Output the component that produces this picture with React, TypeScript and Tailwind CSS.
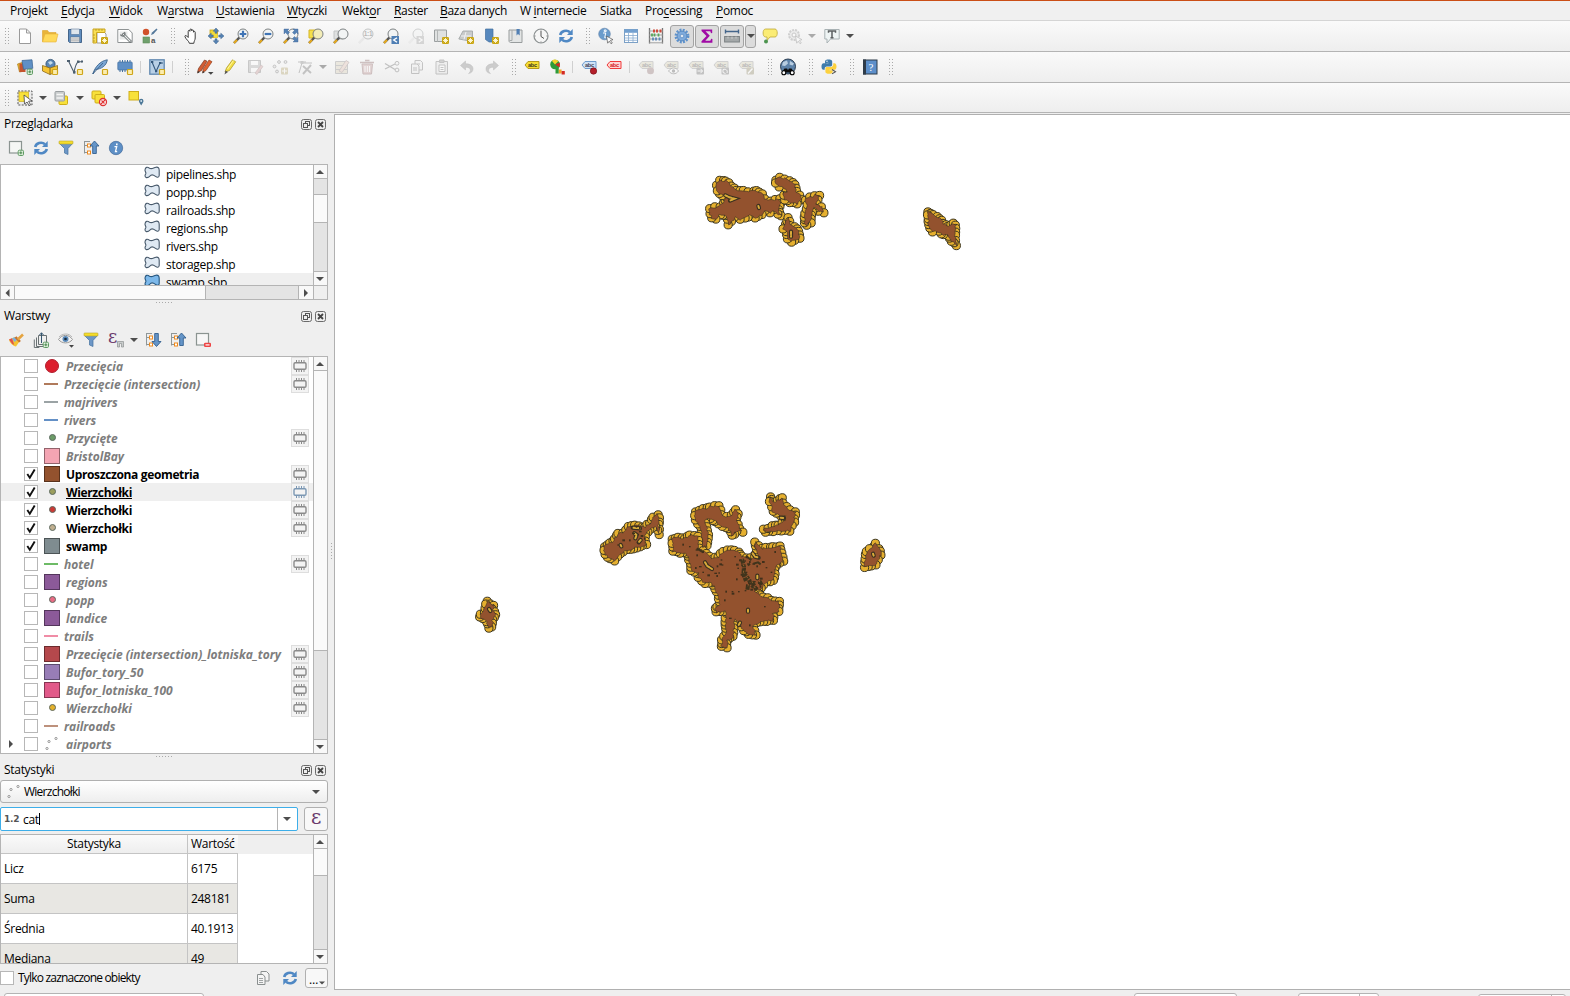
import React from "react";

/* ---------- icon drawings, all on a 16x16 grid ---------- */
const Gold = () => (
  <g>
    <rect x="9" y="9" width="7" height="7" rx="1.3" fill="#c9a512" />
    <path d="M12.5 10v5M10 12.5h5M10.8 10.8l3.4 3.4M14.2 10.8l-3.4 3.4" stroke="#fffbe0" strokeWidth="0.9" />
  </g>
);
const GoldBox = () => <rect x="10.5" y="10.5" width="5" height="5" rx="0.8" fill="#fbedb0" stroke="#cfa61a" strokeWidth="1.2" />;
const GreenPlus = () => (
  <g>
    <rect x="10.2" y="10.2" width="5.3" height="5.3" rx="1.2" fill="#dff0dc" stroke="#5f9b64" />
    <path d="M12.85 11.3v3M11.3 12.85h3" stroke="#4b8a50" />
  </g>
);
const Lens = ({ handle = "#e8ab1e", fill = "#f2f4f4", edge = "#7d8283" }: { handle?: string; fill?: string; edge?: string }) => (
  <g>
    <path d="M1 15L6.3 9.7" stroke="#555" strokeWidth="2.4" opacity={handle === "#ddd" ? 0.15 : 1} />
    <path d="M1 15L4 12" stroke={handle} strokeWidth="2" />
    <circle cx="10" cy="6" r="5" fill={fill} stroke={edge} />
  </g>
);
const Refresh = () => (
  <g fill="none" stroke="#4f88c4" strokeWidth="2.6">
    <path d="M2.2 7C3 3.2 8.5 1.2 12 4.2" />
    <path d="M13.8 9C13 12.8 7.5 14.8 4 11.8" />
    <path d="M14.7 1v6H9zM1.3 15V9H7z" fill="#4f88c4" stroke="none" />
  </g>
);
const Funnel = () => (
  <g>
    <path d="M1.5 3.5h13L10 8.5v6l-3.5-1.5V8.5z" fill="#6d97c7" stroke="#44719f" strokeWidth="0.7" />
    <rect x="1" y="1" width="14" height="3" rx="0.8" fill="#f5dd2c" stroke="#b8a429" strokeWidth="0.6" />
  </g>
);
const Tree = () => (
  <g>
    <path d="M1.5 1v12.5M1.5 5.5h3M1.5 12.5h3M1 1.5h6" stroke="#8f9697" fill="none" />
    <rect x="4.5" y="4" width="3" height="3" fill="#fff" stroke="#f08a1c" />
    <rect x="4.5" y="11" width="3" height="3" fill="#fff" stroke="#f08a1c" />
  </g>
);
const Abc = ({ fill, edge, ink }: { fill: string; edge: string; ink: string }) => (
  <g>
    <path d="M1 6.500l3-3.500h11v7H4z" fill={fill} stroke={edge} strokeWidth="1" transform="translate(0 -0.5)" />
    <text x="4" y="8.300" fontSize="5.6" fontWeight="700" fontFamily="Liberation Sans, sans-serif" fill={ink}>abc</text>
  </g>
);
const Memory = ({ c }: { c: string }) => (
  <g fill="none" stroke={c}>
    <rect x="2" y="4.7" width="12" height="6.6" rx="1.2" strokeWidth="1.4" />
    <path d="M4.5 2v2M7 2v2M9.5 2v2M12 2v2M4.5 12v2M7 12v2M9.5 12v2M12 12v2" strokeWidth="1" />
  </g>
);

const POLY = "M1 5C1.300 1.800 3.500 1.800 5.500 3.200 8 4.600 9.500 2.600 12 2.200 14.500 1.900 15.200 3.300 15.200 5.500v5c-.2 2.300-2.200 2-3.700.9C9.500 9.900 8.500 9.200 7 10.200 5.500 11.500 4.500 13 2.500 12.600.5 12 .8 10.300 1.800 8.800 2.300 7.500.9 6.500 1 5z";

const icons: Record<string, React.ReactNode> = {
  new: <path d="M2.5 1h7l4 4v10.500h-11zM9.500 1v4h4" fill="#fff" stroke="#9a9a9a" strokeLinejoin="round" />,
  open: (
    <g>
      <path d="M.5 13.500V2.500h5l1.500 2h7v9z" fill="#e9b43a" stroke="#dba52c" strokeWidth=".6" />
      <path d="M.5 14L3 6h13l-2 8z" fill="#ffd95a" stroke="#e5b13a" strokeWidth=".6" />
    </g>
  ),
  save: (
    <g>
      <path d="M1.500 1.500h13v13h-12l-1-1z" fill="#5f8dbf" stroke="#44658a" />
      <rect x="4" y="1" width="8.500" height="5.500" fill="#dfe6ec" stroke="#44658a" strokeWidth=".5" />
      <rect x="3.500" y="9" width="9" height="5.500" fill="#e9e9e9" stroke="#5b6f80" strokeWidth=".5" />
      <path d="M4 11h8M4 12.800h8" stroke="#9a9a9a" strokeWidth=".7" />
    </g>
  ),
  layout: (
    <g>
      <path d="M5 3h6l3 3v9H5z" fill="#fff" stroke="#9d9d9d" />
      <path d="M1 1h12v3.500H4.500V15H1z" fill="#f9df55" stroke="#c9a420" />
      <path d="M4 1v2M7 1v2M10 1v2M1 7h2M1 10h2M1 13h2" stroke="#a98c1d" strokeWidth=".7" />
      <Gold />
    </g>
  ),
  manager: (
    <g>
      <path d="M.8 1.500h11l3.400 3.500v9.500H.8z" fill="#fff" stroke="#8f9394" />
      <path d="M2.500 3.500h8v8h-8z" fill="#e6e8e8" />
      <path d="M5.500 5.500L14 14" stroke="#5d6364" strokeWidth="2.600" />
      <path d="M6 6L13.500 13.500" stroke="#e9ecec" strokeWidth="1.200" />
      <path d="M3.500 6.500a2.600 2.600 0 004 1M7.500 4a2.600 2.600 0 010 3" stroke="#6b7172" fill="none" strokeWidth="1.200" />
    </g>
  ),
  style: (
    <g>
      <circle cx="4" cy="4" r="3.200" fill="#d0512a" />
      <path d="M9 7l1-2.500L14.500 .5 15.500 1.500 11.500 6z" fill="#54789a" />
      <rect x="1" y="9" width="6.500" height="6" fill="#6fa06c" stroke="#5a8a58" strokeWidth=".6" />
      <text x="9" y="15.200" fontSize="8" fontWeight="700" fontFamily="Liberation Sans, sans-serif" fill="#555">a</text>
    </g>
  ),
  hand: (
    <path
      d="M5.200 9.500V3.300c0-1.300 1.700-1.300 1.700 0V2c0-1.300 1.800-1.300 1.800 0v.8c0-1.200 1.800-1.200 1.800 0v1.400c0-1.100 1.700-1.100 1.700 0V10c0 2-1.200 3-1.400 5.300H6.400C6 13 3 11.500 2 8.800c-.5-1.300.9-1.800 1.600-.9z"
      fill="#fff" stroke="#3c3c3c" strokeWidth="1" strokeLinejoin="round"
    />
  ),
  pansel: (
    <g>
      <rect x="2" y="2" width="7.500" height="7.500" fill="#f4db3a" stroke="#c9a51b" strokeWidth=".8" />
      <path d="M8 0l2.800 3.200H9v2H7v-2H5.200zM8 16l2.800-3.200H9v-2H7v2H5.200zM0 8l3.200-2.800V7h2v2h-2v1.800zM16 8l-3.200-2.800V7h-2v2h2v1.800z" fill="#5683b4" stroke="#3d648e" strokeWidth=".5" />
      <rect x="6.300" y="6.300" width="3.400" height="3.400" fill="#f4db3a" />
    </g>
  ),
  zoomin: <g><Lens /><path d="M10 2.700v6.600M6.700 6h6.600" stroke="#3f74b5" strokeWidth="2.200" /></g>,
  zoomout: <g><Lens /><path d="M6.700 6h6.600" stroke="#3f74b5" strokeWidth="2.200" /></g>,
  zoomfull: (
    <g>
      <Lens />
      <path d="M1 1h5L4.600 2.500 6.500 4.500 4.500 6.500 2.500 4.600 1 6zM15 1v5l-1.500-1.400-2 1.900-2-2 1.900-2L10 1zM15 14h-5l1.400-1.500-1.900-2 2-2 2 1.900L15 9z" fill="#5582b4" stroke="#41689a" strokeWidth=".4" />
    </g>
  ),
  zoomsel: <g><path d="M1 2h9v8H1z" fill="#f5e04a" stroke="#d5b423" /><Lens fill="#f3edb8" /></g>,
  zoomlayer: <g><path d="M1 3h9v8H1z" fill="#dfe1e1" stroke="#c3c6c6" /><Lens /></g>,
  zoom11: (
    <g opacity=".42">
      <Lens handle="#ddd" />
      <text x="5.800" y="8.300" fontSize="6.500" fontWeight="700" fontFamily="Liberation Sans, sans-serif" fill="#666">1:1</text>
    </g>
  ),
  zoomlast: <g><Lens /><rect x="8.500" y="8" width="7.500" height="8" fill="#4f7fb4" /><path d="M14 9.700L10.700 12l3.300 2.300" stroke="#fff" strokeWidth="1.400" fill="none" /></g>,
  zoomnext: <g opacity=".32"><Lens handle="#ddd" /><rect x="8.500" y="8" width="7.500" height="8" fill="#999" /><path d="M10.700 9.700L14 12l-3.300 2.300" stroke="#fff" strokeWidth="1.400" fill="none" /></g>,
  newmap: <g><path d="M1.500 2h12v11.500h-12z" fill="#dfe1e1" stroke="#9b9fa0" /><path d="M4.500 2v11.500" stroke="#b3b6b6" /><Gold /></g>,
  new3d: <g><path d="M5 3h9.500v6L9 12.500.8 11z" fill="#c9cbcb" stroke="#a3a7a7" strokeWidth=".9" /><path d="M3 8h10M8 4L6 11.500" stroke="#f2f2f2" /><Gold /></g>,
  newbook: <g><path d="M2.500 1h7.500v13H6L2.500 11.500z" fill="#5788bd" stroke="#44709f" strokeWidth=".7" /><Gold /></g>,
  book: <g><path d="M1 2h13v12.500H2.500C1.500 14.500 1 13.500 1 13z" fill="#e3e5e5" stroke="#989c9d" /><path d="M4 2v10.500H1.500" stroke="#a7abab" fill="none" /><path d="M8.500 1h3.200v6.500L10 6 8.500 7.500z" fill="#5280b4" /></g>,
  clock: <g><circle cx="8" cy="8" r="7" fill="#f6f6f6" stroke="#8b9091" strokeWidth="1.200" /><path d="M8 3v5.500l3 2" stroke="#555" fill="none" /><path d="M8 1.500v1M8 13.500v1M1.500 8h1M13.500 8h1" stroke="#777" /></g>,
  refresh: <Refresh />,
  ident: (
    <g>
      <circle cx="6.500" cy="6" r="5.800" fill="#6b9ccc" stroke="#5a7ea6" strokeWidth=".6" />
      <path d="M6.300 2h1.800v1.700H6.300zM5 5h2.700l-1 4.800h1.200" stroke="#fff" strokeWidth="1" fill="none" />
      <path d="M8.500 8l6.500 3.700-2.700.7 2 2.600-1.200.8-1.900-2.600-1.500 2z" fill="#fff" stroke="#555" strokeWidth=".7" />
    </g>
  ),
  table: <g><rect x="1.500" y="1.500" width="13" height="13" fill="#fff" stroke="#7ba0c6" /><path d="M1.500 1.500h13v3.300h-13z" fill="#73a0d0" /><path d="M5.500 5v9M10 5v9M2 7.500h12M2 10h12M2 12.300h12" stroke="#88abcf" strokeWidth=".8" /></g>,
  abacus: (
    <g>
      <path d="M1.500 0v15.500M14.500 0v15.500" stroke="#777" strokeWidth="1.300" />
      <path d="M1 14.800h14M1 3h14M1 7h14M1 11h14" stroke="#999" strokeWidth=".9" />
      <path d="M6 1.500v3M9 1.500v3M12.500 1.500v3" stroke="#d04a3b" strokeWidth="2" />
      <path d="M4 5.500v3M6.500 5.500v3M10.500 5.500v3" stroke="#57a55c" strokeWidth="1.800" />
      <path d="M5 9.500v3M8 9.500v3M11.500 9.500v3" stroke="#5b88b8" strokeWidth="1.800" />
    </g>
  ),
  gear: (
    <g>
      <circle cx="8" cy="8" r="6" fill="none" stroke="#5e92cc" strokeWidth="2.800" strokeDasharray="1.900 1.242" />
      <circle cx="8" cy="8" r="4.900" fill="#7fabdc" stroke="#4c80ba" strokeWidth=".8" />
      <circle cx="8" cy="8" r="1.800" fill="#dfe7f0" stroke="#4c80ba" strokeWidth=".6" />
    </g>
  ),
  sigma: <path d="M13.200 5V1.500H2.500V3l5 5-5 5.200v1.500h10.900V11l-1.200-.2-.9 1.900H6.300l4.500-4.900L6.500 3.300h4.800l.7 1.900z" fill="#a00aa5" />,
  measure: <g><path d="M1 3.500h14M1.500 1.500v4M14.500 1.500v4" stroke="#44658a" strokeWidth="1.400" /><rect x=".6" y="8.500" width="14.800" height="5.500" fill="#a4a8a9" stroke="#7d8284" /><path d="M4 8.500v2M8 8.500v2.500M12 8.500v2" stroke="#d5d5d5" strokeWidth=".8" /></g>,
  tip: <g><path d="M3.500 1h9.500c3 0 3 8 0 8h-5l-3 3.500V9H3.500c-3.200 0-3.200-8 0-8z" fill="#fbec75" stroke="#bfa93a" strokeWidth=".8" /><circle cx="4" cy="13.500" r="2" fill="#4c9450" /></g>,
  actions: <g opacity=".4"><circle cx="7" cy="7" r="5" fill="#ddd" stroke="#999" strokeWidth="2" strokeDasharray="2 1" /><circle cx="7" cy="7" r="2" fill="#fff" stroke="#888" /><path d="M8.500 8l6.500 3.700-2.700.7 2 2.600-1.200.8-1.900-2.600-1.500 2z" fill="#fff" stroke="#777" strokeWidth=".8" /></g>,
  annot: <g><path d="M.8 1.500h14.400v9.500H6.500L3 15v-4H.8z" fill="#eef4f4" stroke="#a9b2b4" /><path d="M4.500 4.800V3h7v1.800M8 3v7M6.500 9.800h3" stroke="#5b5f60" fill="none" strokeWidth="1.500" /></g>,

  dsm: <g><path d="M.5 5l6-2 1 9-5 1z" fill="#e7b42f" stroke="#a9801c" strokeWidth=".7" /><path d="M2.500 4.500h6v8.500h-6z" fill="#c5542e" /><path d="M5 1.500L15 .8l.8 8.500-9.300 1z" fill="#5f90c5" stroke="#3f6a98" strokeWidth=".8" /><GreenPlus /></g>,
  geopkg: <g><circle cx="8.500" cy="5" r="4.600" fill="#5b86b5" stroke="#2f5071" strokeWidth=".8" /><path d="M6 3l3-1 2 2-3 2z" fill="#c5dbe8" /><path d="M.5 6.500L8 9l7.500-2.500v6L8 15.500.5 12z" fill="#f6c433" stroke="#8c6a18" strokeWidth=".8" /><path d="M8 9v6.500" stroke="#8c6a18" /><GoldBox /></g>,
  shp: <g><path d="M1.500 2l5.500 11.500C8 8 9 4.500 11 2.800h4" fill="none" stroke="#4d5f6f" strokeWidth="1.100" /><path d="M0 1h3v2H0zM6 12h2.500v2.500H6zM10 1.500h2.500V4H10zM14 1.500h2v2h-2z" fill="#4d5f6f" /><GoldBox /></g>,
  feather: <g><path d="M.8 15C3 8 8 2 15.300.8 14.500 7 9 10 3.500 10.500z" fill="#79a5d3" stroke="#3e6690" strokeWidth=".9" /><path d="M.8 15L11 4" stroke="#31577f" strokeWidth=".8" /><GoldBox /></g>,
  chip: <g><path d="M3 1v12M5.500 1v12M8 1v12M10.500 1v12M13 1v12" stroke="#44709f" strokeWidth="1" /><rect x=".8" y="3" width="14.400" height="8" rx=".8" fill="#5f90c6" stroke="#44709f" strokeWidth=".7" /><GoldBox /></g>,
  virt: <g><rect x=".8" y=".8" width="14.400" height="14.400" fill="#b9d0e6" stroke="#6188b0" strokeWidth="1.300" /><path d="M3 3l4 9.500L11 4h3" stroke="#34587c" fill="none" strokeWidth="1.100" /><path d="M2 2h2.300v2H2zM6 11h2.300v2.300H6zM10 3h2.300v2H10z" fill="#34587c" /><GoldBox /></g>,
  pencils: (
    <g>
      <path d="M.5 13.500l1-4L7.500 1l2.500 1.200L4.500 11.500z" fill="#d25c33" stroke="#7a3a22" strokeWidth=".7" />
      <path d="M5.500 13.500l1-4 5.500-8.500 3 1.700L9 11.500z" fill="#e2622f" stroke="#8e4023" strokeWidth=".7" />
      <path d="M.3 14.500l.7-2.500 1.700 1.200zM5.300 14.500l.7-2.500 1.700 1.200z" fill="#333" />
      <path d="M11 13h5.500l-2.700 2.700z" fill="#444" />
    </g>
  ),
  pencil: <g><path d="M3 13l1.500-4L10.500.8l3.200 2L7.500 11.500z" fill="#f3df45" stroke="#b19d2d" strokeWidth=".8" /><path d="M11.500 1.400L5.500 10" stroke="#fff6a5" /><path d="M2.500 15.500l1-4 2.500 1.500z" fill="#555" /></g>,
  savee: <g opacity=".35"><path d="M1.500 1.500h12v12h-12z" fill="#aaa" stroke="#777" /><path d="M4 2h7v4H4zM4 9h7v4.500H4z" fill="#fff" /><path d="M8 14l6-8 2 1.500-6 8z" fill="#c99" stroke="#866" strokeWidth=".6" /></g>,
  addpts: <g opacity=".38"><g fill="#ddd" stroke="#777"><circle cx="7" cy="3" r="1.400" /><circle cx="2.500" cy="7.500" r="1.400" /><circle cx="13.500" cy="3" r="1.400" /><circle cx="5" cy="12.500" r="1.400" /></g><rect x="9" y="8.500" width="7" height="7" rx="1" fill="#b7a873" /><path d="M12.500 9.500v5M10 12h5" stroke="#fff" /></g>,
  vertex: <g opacity=".38"><path d="M2 14L5 4h10M1 3h8" stroke="#777" fill="none" /><path d="M6 7l8 7M14 6l-8 9" stroke="#777" strokeWidth="1.900" /><path d="M3.500 2h3v3h-3z" fill="#888" /></g>,
  modattr: <g opacity=".42"><path d="M1.500 2.500h12v12h-12z" fill="#ddd5c0" stroke="#999" /><path d="M1.500 6.500h12M1.500 10.500h12" stroke="#999" /><path d="M5 12L12 1.500l3 1.800-7 10.200z" fill="#e3c7bb" stroke="#988" strokeWidth=".8" /></g>,
  trash: <g opacity=".42"><path d="M3 5h10.500l-1 10h-8.500z" fill="#c9a6a6" stroke="#977" /><path d="M1 3.500h14M6 1.500h4.500" stroke="#977" strokeWidth="1.700" /><path d="M6 7v6M8.300 7v6M10.600 7v6" stroke="#fff" /></g>,
  cut: <g opacity=".4" fill="none" stroke="#777"><path d="M1 4.500l10 6M1 10l10-5" strokeWidth="1.300" /><circle cx="13" cy="4.300" r="1.900" /><circle cx="13" cy="11" r="1.900" /></g>,
  copy: <g opacity=".38" fill="#eee" stroke="#777"><path d="M6 1.500h5.500l2 2V11H6z" /><path d="M2.500 5H8l2 2v7.500H2.500z" /><path d="M4 9h4M4 11h4M8 5h3" /></g>,
  paste: <g opacity=".38" fill="#e4e4e4" stroke="#777"><path d="M2 2.500h11.500v12.500H2z" /><path d="M5.500 1h4.500v2.500H5.500z" fill="#999" /><path d="M5 6h6v6.500H5zM6.500 8.500h3M6.500 10.500h3" fill="#fff" /></g>,
  undo: <path d="M1.500 6.500L6.500 2v2.800c5 0 7.500 2 7.500 5.200 0 2.200-1.600 4-4.500 4.600 1.300-1.100 1.900-2.200 1.900-3.400 0-2-1.700-3-4.900-3V11z" fill="#ccc" stroke="#bdbdbd" strokeWidth=".5" />,
  redo: <path transform="translate(16 0) scale(-1 1)" d="M1.500 6.500L6.500 2v2.800c5 0 7.500 2 7.500 5.200 0 2.200-1.600 4-4.500 4.600 1.300-1.100 1.900-2.200 1.900-3.400 0-2-1.700-3-4.900-3V11z" fill="#ccc" stroke="#bdbdbd" strokeWidth=".5" />,
  label: <Abc fill="#f7dd31" edge="#b59a1c" ink="#3a3a20" />,
  diagram: (
    <g>
      <circle cx="6" cy="5.500" r="4.800" fill="#2f9b3a" />
      <path d="M6 5.500L2.800 1.800A5 5 0 019.500 2z" fill="#f6d32b" />
      <path d="M6 5.500l4.800-2v5z" fill="#d42a23" />
      <path d="M6.500 8h3.300v6.500H6.500z" fill="#2f9b3a" />
      <path d="M9.800 10.500h2.800v4H9.800z" fill="#f0a52b" />
      <path d="M12.600 12h3.200v3.500h-3.200z" fill="#d42a23" />
    </g>
  ),
  labelpin: <g><Abc fill="#cfe2f6" edge="#6f9ccc" ink="#445" /><circle cx="12.500" cy="12" r="3.200" fill="#b41f2a" stroke="#7e1119" strokeWidth=".7" /></g>,
  labelred: <Abc fill="#ffd4d4" edge="#f03a3a" ink="#d22222" />,
  ld1: <g opacity=".38"><Abc fill="#d8d3b8" edge="#999" ink="#555" /><circle cx="12.500" cy="11.800" r="3.500" fill="#997c7c" /></g>,
  ld2: <g opacity=".38"><Abc fill="#d8d3b8" edge="#999" ink="#555" /><path d="M5.500 12c3-4 7.500-4 10 0-2.500 3.700-7 3.700-10 0z" fill="#fff" stroke="#666" /><circle cx="10.500" cy="12" r="1.700" fill="#666" /></g>,
  ld3: <g opacity=".38"><Abc fill="#d8d3b8" edge="#999" ink="#555" /><rect x="8.500" y="8.500" width="7.500" height="7" rx="1" fill="#777" /><path d="M9.500 12h5M12.500 9.800l2 2.200-2 2.200" stroke="#fff" fill="none" /></g>,
  ld4: <g opacity=".38"><Abc fill="#d8d3b8" edge="#999" ink="#555" /><rect x="8.500" y="8.500" width="7.500" height="7" rx="1" fill="#777" /><path d="M10 10.500c3-1 5 1 4 3.500M10 10.500v3l2.500 1" stroke="#fff" fill="none" /></g>,
  ld5: <g opacity=".38"><Abc fill="#d8d3b8" edge="#999" ink="#555" /><rect x="8.500" y="8.500" width="7.500" height="7" rx="1" fill="#999272" /><path d="M10 14.500l4.500-5" stroke="#fff" strokeWidth="1.500" /></g>,
  osm: (
    <g>
      <circle cx="8" cy="7.500" r="7.500" fill="#5d82a8" stroke="#1d2f44" strokeWidth=".9" />
      <path d="M3 3l4-1.500 1 3L5 7 2 6.500zM10 2l4 2.500-1.500 2L9.500 5.500z" fill="#b8cde0" />
      <path d="M4.500 9.500h2.700v1h1.600v-1h2.700l2.700 4H1.800z" fill="#0b0b0b" />
      <circle cx="3.800" cy="13.800" r="2" fill="#fff" stroke="#000" strokeWidth="1.100" /><circle cx="12.200" cy="13.800" r="2" fill="#fff" stroke="#000" strokeWidth="1.100" />
    </g>
  ),
  python: (
    <g>
      <path d="M4 4.200V2.500C4 1 5.500.5 7.500.5s3.700.5 3.700 2v3.300c0 1-.8 1.700-1.700 1.700H5.800C4.500 7.500 3.700 8.500 3.700 9.700v1H2.500C1 10.700.5 9.300.5 7.500s.7-3.300 2-3.300h5V3.700z" fill="#3f7cac" />
      <path d="M12.200 4.300h1.300c1.300 0 2 1.400 2 3.200s-.6 3.200-2 3.200h-5v.6h3.200v1.500c0 1.400-1.600 2-3.700 2s-3.600-.6-3.600-2V9.700c0-1 .7-1.700 1.700-1.700h3.800c1.300 0 2.300-1 2.300-2.200z" fill="#fcd13f" />
      <circle cx="6" cy="2.300" r=".7" fill="#fff" /><path d="M11 10.500l3.500 2.200-3.500 2.200" stroke="#555" fill="none" strokeWidth="1.100" />
    </g>
  ),
  help: <g><rect x="1.500" y="1" width="13.500" height="14" fill="#5d8fca" stroke="#2d3a48" /><rect x="1" y=".5" width="3" height="15" fill="#2f3b49" /><text x="6.500" y="12" fontSize="11" fontFamily="Liberation Serif, serif" fill="#fff">?</text></g>,

  selrect: <g><rect x="1" y="1" width="14" height="14" fill="#ececec" stroke="#555" strokeDasharray="2 1.300" /><rect x="2" y="2" width="9.500" height="9.500" fill="#f8e13a" stroke="#cfae1a" strokeWidth=".7" /><path d="M7 5l8 6-3.400.2 1.900 3.600-1.600.8-1.800-3.600L7.500 14z" fill="#fff" stroke="#444" strokeWidth=".8" /></g>,
  selval: <g><rect x="5" y="6" width="8.500" height="8.500" rx="1" fill="#f8e13a" stroke="#cfae1a" /><rect x="1" y="1.500" width="9.500" height="9.500" rx="1" fill="#c9cccd" stroke="#9a9fa1" /><path d="M2.500 4.500h6.500M2.500 8h6.500" stroke="#f4f4f4" strokeWidth="1.300" /></g>,
  desel: <g><rect x="1" y="1" width="9" height="8" rx="1" fill="#f8e13a" stroke="#cfae1a" /><rect x="4" y="4.500" width="9.500" height="8.500" rx="1" fill="#f8e13a" stroke="#cfae1a" /><circle cx="12" cy="12" r="3.500" fill="#fff" stroke="#df3434" strokeWidth="1.300" /><path d="M9.500 14.500l5-5M10.500 10.500l3 3" stroke="#df3434" strokeWidth="1.100" /></g>,
  selloc: <g><rect x="1" y="1.500" width="9.500" height="8.500" fill="#f8e13a" stroke="#cfae1a" /><path d="M13.200 15.500c-1-2-2.300-3-2.300-4.500a2.300 2.300 0 014.600 0c0 1.500-1.300 2.500-2.300 4.500z" fill="#4c7797" /><circle cx="13.200" cy="11" r=".9" fill="#d7e5ee" /></g>,

  addlayer: <g><rect x="1.500" y="1.500" width="12" height="11.500" fill="#f5f7f5" stroke="#8b9491" strokeWidth="1.200" /><GreenPlus /></g>,
  funnel: <Funnel />,
  collapse: <g><Tree /><path d="M11.500 1l4.500 5h-2.700v7.500h-3.600V6H7z" fill="#6595c8" stroke="#33608f" strokeWidth=".9" /></g>,
  expand: <g><Tree /><path d="M11.500 14.500L7 9.500h2.700V1.500h3.600v8H16z" fill="#6595c8" stroke="#33608f" strokeWidth=".9" /></g>,
  info: <g><circle cx="8" cy="8" r="6.700" fill="#5d8fc6" stroke="#41699a" strokeWidth=".7" /><path d="M8 3.600h1.600v1.700H8z" fill="#fff" /><path d="M6.500 6.700h2.200l-1.200 5h1.700" stroke="#fff" strokeWidth="1.300" fill="none" /></g>,
  brush: <g><path d="M1 7.500l6-2.500 4.500 4.500-3.500 5c-3-.5-6-3-7-7z" fill="#f4c332" /><path d="M1 7.500l3-1.300 2.200 6.800-2-1.200z" fill="#e05050" /><path d="M4 6.200L7.500 5l2 2.500L6.500 10z" fill="#7db0dd" /><path d="M7.500 5L12 9.800" stroke="#c8752c" strokeWidth="2.400" /><path d="M9.800 7.500L15 2.500" stroke="#e5a441" strokeWidth="2.600" /></g>,
  addgroup: <g fill="none" stroke="#697173"><path d="M5.500 3.500h8v9h-8z" fill="#eee" /><path d="M3.500 5.500v9h8M1.300 7.500v8h5" /><path d="M8.500 11V.8M6.500 3l2-2.200 2 2.200" stroke="#33556f" /><GreenPlus /></g>,
  eye: <g><path d="M.5 7.500C4 2 11 2 14.500 7.500 11 12 4 12 .5 7.500z" fill="#f3f3f3" stroke="#989898" /><path d="M1 5C4.500 1 11 1 14 5" fill="none" stroke="#aaa" strokeWidth=".8" /><circle cx="7.500" cy="7" r="3" fill="#5a8abb" /><circle cx="7.500" cy="7" r="1.300" fill="#182838" /><path d="M11 13h5l-2.500 2.700z" fill="#444" /></g>,
  eps: <g><text x="0" y="10.500" fontSize="18" fontFamily="DejaVu Serif, serif" fill="#6a3a6c">ε</text><path d="M9.500 15v-5.500h6V15h-2v-3.500h-2V15z" fill="#c9cccc" stroke="#8e9292" strokeWidth=".7" /></g>,
  remove: <g><rect x="1.500" y="1.500" width="12" height="11.500" fill="#f7f7f7" stroke="#8b9491" strokeWidth="1.200" /><rect x="9" y="10.800" width="7" height="4.200" rx="1.200" fill="#ee4444" /><path d="M10.500 12.900h4" stroke="#fff" strokeWidth="1.200" /></g>,
  poly: <path d={POLY} fill="#dfe9f3" stroke="#46586a" strokeWidth="1.100" />,
  polysel: <path d={POLY} fill="#7cb8ea" stroke="#25567f" strokeWidth="1.100" />,
  mem: <Memory c="#8a8a8a" />,
  memsel: <Memory c="#7b97b3" />,
  points: <g fill="#fff" stroke="#8c8c8c" strokeWidth=".9"><circle cx="3" cy="12.500" r="1.100" /><circle cx="5" cy="5.500" r="1.100" /><circle cx="12" cy="2.500" r="1.100" /></g>,
  copy2: <g fill="#f4f4f4" stroke="#8a8f8f"><path d="M6 1.500h5.500l2.500 2.500V11H6z" /><path d="M2.500 4.500H8L10 7v7.500H2.500z" /><path d="M4 8.500h4M4 10.500h4M4 12.500h4" strokeWidth=".8" /></g>,
};

const Icon = ({ n }: { n: string }) => (
  <svg viewBox="0 0 16 16" className="block h-4 w-4 shrink-0 overflow-visible">{icons[n]}</svg>
);

const Arrow = ({ dir = "down", light = false }: { dir?: "down" | "up" | "left" | "right"; light?: boolean }) => {
  const d = { down: "M0 2h8L4 6z", up: "M0 6h8L4 2z", left: "M5.500 0v8L1.500 4z", right: "M2 0v8l4-4z" }[dir];
  return <svg viewBox="0 0 8 8" className="block h-2 w-2 shrink-0"><path d={d} fill={light ? "#aaa" : "#4d4d4d"} /></svg>;
};

const Handle = () => (
  <div className="h-4 w-[4px] shrink-0 bg-[radial-gradient(circle_at_0.5px_0.5px,#a9a9a9_0.7px,transparent_0.8px)] bg-[size:3px_3px]" />
);

/* toolbar tokens: "|w" handle cell, "/w" separator cell, "<w" arrow, "~w" light arrow, "_w" gap, "#name" pressed button */
const ToolRow = ({ items, h }: { items: string[]; h: string }) => (
  <div className={`flex items-center border-b border-[#b4b4b4] bg-gradient-to-b from-[#fafafa] to-[#eeeeee] ${h}`}>
    {items.map((t, i) => {
      const w = Number(t.slice(1));
      if (t[0] === "|") return <div key={i} style={{ width: w }} className="flex shrink-0 justify-end pr-[3px]"><Handle /></div>;
      if (t[0] === "/") return <div key={i} style={{ width: w }} className="flex shrink-0 justify-center"><div className="h-3 w-px bg-[#d0d0d0]" /></div>;
      if (t[0] === "<") return <div key={i} style={{ width: w }} className="flex shrink-0 justify-center"><Arrow /></div>;
      if (t[0] === "~") return <div key={i} style={{ width: w }} className="flex shrink-0 justify-center"><Arrow light /></div>;
      if (t[0] === "_") return <div key={i} style={{ width: w }} className="shrink-0" />;
      if (t[0] === "#")
        return (
          <div key={i} className="mr-px flex h-[23px] w-6 shrink-0 items-center justify-center rounded-[3px] border border-[#a3a3a3] bg-[#dcdcdc]">
            <Icon n={t.slice(1)} />
          </div>
        );
      if (t[0] === "!")
        return <div key={i} className="mr-px flex h-[23px] w-[11px] shrink-0 items-center justify-center rounded-[3px] border border-[#a3a3a3] bg-[#dcdcdc]"><Arrow /></div>;
      return <div key={i} className="flex w-[25px] shrink-0 pl-[5px]"><Icon n={t} /></div>;
    })}
  </div>
);

const row1 = ["|12", "new", "open", "save", "layout", "manager", "style", "|16", "hand", "pansel", "zoomin", "zoomout", "zoomfull", "zoomsel", "zoomlayer", "zoom11", "zoomlast", "zoomnext", "newmap", "new3d", "newbook", "book", "clock", "refresh", "|15", "ident", "table", "abacus", "_2", "#gear", "#sigma", "#measure", "!", "tip", "actions", "~10", "_2", "annot", "<11"];
const row2 = ["|12", "dsm", "geopkg", "shp", "feather", "chip", "/7", "virt", "/7", "|16", "pencils", "pencil", "savee", "addpts", "vertex", "~11", "_1", "modattr", "trash", "cut", "copy", "paste", "undo", "redo", "|15", "label", "diagram", "/7", "labelpin", "labelred", "/7", "ld1", "ld2", "ld3", "ld4", "ld5", "_1", "|16", "osm", "|16", "python", "|16", "help", "|14"];
const row3 = ["|12", "selrect", "<11", "_1", "selval", "<11", "_1", "desel", "<11", "_1", "selloc"];

const menu: [string, string, string, number][] = [
  ["Pro", "j", "ekt", 51], ["", "E", "dycja", 48], ["", "W", "idok", 48], ["W", "a", "rstwa", 59], ["", "U", "stawienia", 71],
  ["", "W", "tyczki", 55], ["Wekt", "o", "r", 52], ["", "R", "aster", 46], ["", "B", "aza danych", 80], ["W ", "i", "nternecie", 80],
  ["Siatka", "", "", 45], ["Pro", "c", "essing", 71], ["", "P", "omoc", 60],
];

const PanelTitle = ({ t }: { t: string }) => (
  <div className="flex h-5 shrink-0 items-center justify-between pl-1 pr-[2px]">
    <span>{t}</span>
    <div className="flex gap-[3px]">
      <svg viewBox="0 0 11 11" className="h-[11px] w-[11px] overflow-visible"><rect x=".5" y=".5" width="10" height="10" rx="2" fill="#eee" stroke="#6b6b6b" /><rect x="4.500" y="2.500" width="4" height="4" fill="none" stroke="#555" /><rect x="2.500" y="4.500" width="4" height="4" fill="#eee" stroke="#555" /></svg>
      <svg viewBox="0 0 11 11" className="h-[11px] w-[11px] overflow-visible"><rect x=".5" y=".5" width="10" height="10" rx="2" fill="#eee" stroke="#6b6b6b" /><path d="M3 3l5 5M8 3L3 8" stroke="#444" strokeWidth="1.800" /></svg>
    </div>
  </div>
);

const Splitter = () => (
  <div className="flex h-[6px] shrink-0 items-start justify-center pt-[2px]">
    <div className="h-px w-[17px] bg-[repeating-linear-gradient(90deg,#aaa_0_1px,transparent_1px_3px)]" />
  </div>
);

const VScroll = ({ before, thumb }: { before: string; thumb: string }) => (
  <div className="flex w-[14px] shrink-0 flex-col border-l border-[#b4b4b4] bg-[#e4e4e4]">
    <div className="flex h-[14px] shrink-0 items-center border-b border-[#b4b4b4] bg-[#f8f8f8] pl-[2px]"><Arrow dir="up" /></div>
    <div className={`shrink-0 ${before}`} />
    <div className={`shrink-0 border-b border-[#b4b4b4] bg-[#fafafa] ${thumb}`} />
    <div className="flex-1" />
    <div className="flex h-[14px] shrink-0 items-center border-t border-[#b4b4b4] bg-[#f8f8f8] pl-[2px]"><Arrow /></div>
  </div>
);

const files = ["pipelines.shp", "popp.shp", "railroads.shp", "regions.shp", "rivers.shp", "storagep.shp", "swamp.shp"];

type Layer = { n: string; k: "dot" | "big" | "line" | "fill" | "pts"; c: string; on?: boolean; m?: boolean; cur?: boolean };
const layers: Layer[] = [
  { n: "Przecięcia", k: "big", c: "#dc1e2d", m: true },
  { n: "Przecięcie (intersection)", k: "line", c: "#b07a5b", m: true },
  { n: "majrivers", k: "line", c: "#9ba3a5" },
  { n: "rivers", k: "line", c: "#6490c6" },
  { n: "Przycięte", k: "dot", c: "#6b9b67", m: true },
  { n: "BristolBay", k: "fill", c: "#f4a5b3" },
  { n: "Uproszczona geometria", k: "fill", c: "#93522e", on: true, m: true },
  { n: "Wierzchołki", k: "dot", c: "#9b9e5d", on: true, m: true, cur: true },
  { n: "Wierzchołki", k: "dot", c: "#cc3935", on: true, m: true },
  { n: "Wierzchołki", k: "dot", c: "#bfae8f", on: true, m: true },
  { n: "swamp", k: "fill", c: "#7f8c90", on: true },
  { n: "hotel", k: "line", c: "#6dbb66", m: true },
  { n: "regions", k: "fill", c: "#8c5a99" },
  { n: "popp", k: "dot", c: "#e96b85" },
  { n: "landice", k: "fill", c: "#8c5a99" },
  { n: "trails", k: "line", c: "#f08ca6" },
  { n: "Przecięcie (intersection)_lotniska_tory", k: "fill", c: "#b5484c", m: true },
  { n: "Bufor_tory_50", k: "fill", c: "#987db7", m: true },
  { n: "Bufor_lotniska_100", k: "fill", c: "#e15989", m: true },
  { n: "Wierzchołki", k: "dot", c: "#e3b02b", m: true },
  { n: "railroads", k: "line", c: "#bd917c" },
  { n: "airports", k: "pts", c: "" },
];

const Symbol = ({ l }: { l: Layer }) => (
  <div className={`flex h-4 shrink-0 items-center justify-center ${l.k === "line" ? "w-[14px]" : "w-4"}`}>
    {l.k === "line" && <div className="mb-px h-[2px] w-[14px]" style={{ backgroundColor: l.c }} />}
    {l.k === "fill" && <div className="h-4 w-4 border border-black/40" style={{ backgroundColor: l.c }} />}
    {l.k === "dot" && <div className="mb-px h-[7px] w-[7px] rounded-full border border-[#5d6a60]" style={{ backgroundColor: l.c }} />}
    {l.k === "big" && <div className="h-[14px] w-[14px] rounded-full border border-[#b02030]" style={{ backgroundColor: l.c }} />}
    {l.k === "pts" && <Icon n="points" />}
  </div>
);

const Check = ({ on = false }: { on?: boolean }) => (
  <div className="h-[14px] w-[14px] shrink-0 border border-[#b7b7b7] bg-white">
    {on && <svg viewBox="0 0 12 12" className="block h-3 w-3"><path d="M2.300 6l2.500 3.700L9.700 1.500" fill="none" stroke="#111" strokeWidth="1.900" /></svg>}
  </div>
);

/* ---------- map canvas ---------- */
type Shape = { ox: number; oy: number; p: string; inner?: string[] };
const shapes: Shape[] = [
  { ox: 690, oy: 160, p: "78,75 90,62 108,62 125,78 140,92 160,92 175,95 190,92 208,95 218,102 225,115 240,122 255,120 268,118 272,130 264,150 274,168 262,162 250,150 240,158 225,152 215,165 195,172 180,165 165,175 150,178 135,172 125,185 115,193 108,165 90,165 78,178 66,174 60,162 58,145 75,142 90,140 100,128 108,110 95,105 82,92", inner: ["106,106 118,112 134,116 120,122", "205,138 207,144"] },
  { ox: 690, oy: 160, p: "256,60 270,53 285,56 300,62 316,75 320,95 330,105 335,118 322,130 300,128 285,118 280,104 292,95 285,85 268,80 255,70" },
  { ox: 690, oy: 160, p: "345,120 360,112 375,106 390,106 385,120 380,132 395,140 400,157 385,152 370,140 368,155 362,187 350,197 342,190 345,160 350,135" },
  { ox: 690, oy: 160, p: "285,192 295,174 300,195 315,200 327,215 330,235 315,240 303,245 293,235 290,215 280,205", inner: ["303,215 303,230"] },
  { ox: 690, oy: 160, p: "712,155 730,165 750,175 760,190 775,200 790,190 797,195 795,215 797,240 800,257 785,242 775,227 760,225 745,215 728,215 718,205 715,185" },
  { ox: 590, oy: 485, p: "42,185 60,175 75,160 85,145 100,145 115,125 135,120 155,125 165,125 180,115 190,95 203,88 208,100 205,120 208,148 195,125 180,135 165,145 168,180 150,185 130,192 110,195 90,205 75,228 60,222 45,208", inner: ["133,145 140,150 136,160", "92,180 94,184", "150,130 128,128", "152,165 146,172"] },
  { ox: 590, oy: 485, p: "315,80 340,72 360,65 388,62 395,90 410,95 425,90 435,73 445,85 440,110 450,130 457,140 440,140 425,152 415,130 395,125 375,110 360,100 345,105 350,125 355,150 350,183 338,185 335,150 330,125 316,105" },
  { ox: 590, oy: 485, p: "245,162 265,158 285,160 300,150 325,155 328,190 350,205 365,222 385,215 400,200 425,193 445,200 455,215 480,220 505,212 498,195 495,172 515,190 540,188 570,183 575,205 580,230 560,237 555,255 550,287 530,290 515,310 495,318 520,335 545,345 567,350 567,380 550,385 550,407 520,408 500,415 490,425 497,450 475,447 460,435 448,412 435,400 432,430 430,455 412,465 410,488 393,485 395,465 410,440 405,410 408,385 405,378 378,382 375,370 390,360 385,330 375,310 365,292 345,295 325,278 325,265 303,255 300,235 290,205 270,203 248,200 250,185", inner: ["488,205 495,215 506,218", "474,374 474,380", "502,272 502,280", "345,232 352,243 366,252", "450,413 446,420"] },
  { ox: 590, oy: 485, p: "540,35 548,52 562,47 578,38 580,55 600,75 617,80 612,110 600,137 575,138 550,138 525,140 520,134 545,124 565,120 585,105 585,95 570,92 548,80 545,65 538,50", inner: ["572,98 582,99"] },
  { ox: 590, oy: 485, p: "848,185 857,176 868,190 874,210 866,225 858,240 845,242 822,246 826,220 830,200", inner: ["849,206 851,212"] },
  { ox: 460, oy: 585, p: "80,48 92,58 102,60 98,72 108,90 98,105 96,125 85,128 80,108 60,96 62,86 72,80", inner: ["87,72 91,78"] },
];

const rnd = (n: number) => {
  const v = Math.sin(n * 127.1 + 11.7) * 43758.5453;
  return v - Math.floor(v);
};

const parse = (s: Shape, str: string) => str.split(" ").map((q) => q.split(",").map(Number)).map(([x, y]) => [x / 3 + s.ox, y / 3 + s.oy]);
const toPoints = (pts: number[][]) => pts.map((p) => p.join(",")).join(" ");

const walk = (pts: number[][], step: number, jitter: number) => {
  const out: number[][] = [];
  pts.forEach((a, i) => {
    const b = pts[(i + 1) % pts.length];
    const n = Math.max(1, Math.round(Math.hypot(b[0] - a[0], b[1] - a[1]) / step));
    for (let k = 0; k < n; k++) {
      const q = i * 13 + k * 7 + step;
      out.push([a[0] + ((b[0] - a[0]) * k) / n + (rnd(q) - 0.5) * jitter, a[1] + ((b[1] - a[1]) * k) / n + (rnd(q + 3.3) - 0.5) * jitter]);
    }
  });
  return out;
};

const specks = "391,237 398,240 383,243 376,265 382,272 388,264 441,238 456,240 455,268 459,275 409,319 428,320 428,325 447,320 441,282 474,237 480,230 466,228 463,250 470,262 482,285 478,295 490,300 500,308 484,313 495,290 471,300 507,295 512,304 467,317 519,230 530,248 502,243 490,237 556,200 545,262 513,280 525,365 322,210 330,245 318,248 340,262 355,270 300,185 280,178 150,140 120,165 85,180 100,165 145,175 165,160 130,145 150,128 140,126 155,152 436,215 405,345 420,400 480,420 395,225 450,225 445,250 470,215 320,195 340,200";
const patches = [
  "M456 222l6 24-2 22 8 20M460 262l14 18 10 20 18 14M486 290l12 22M508 288l8 14M474 300l-2 16",
  "M468 212l16 14M490 236l14-4 8 6M480 236l-6 6M320 190l20 12",
];

const MapCanvas = () => (
  <svg viewBox="335 115 1235 874" className="block h-[874px] w-[1235px]">
    {shapes.map((s, i) => (
      <g key={i}>
        {walk(parse(s, s.p), 4, 1.2).map(([x, y], j) => <circle key={j} cx={x} cy={y} r="4.100" fill="#e6b02f" stroke="#3a3521" strokeWidth="1" />)}
      </g>
    ))}
    {shapes.map((s, i) => (
      <polygon key={i} points={toPoints(walk(parse(s, s.p), 2.2, 2))} fill="#93522e" stroke="#3a3020" strokeWidth=".6" />
    ))}
    {shapes.map((s, i) => (
      <g key={i}>
        {(s.inner || []).map((t, j) => (
          <g key={j} fill="none" strokeLinecap="round">
            <polyline points={toPoints(parse(s, t))} stroke="#3a3020" strokeWidth="4.200" />
            <polyline points={toPoints(parse(s, t))} stroke="#d9ab3a" strokeWidth="2" strokeDasharray="2.500 1.500" />
          </g>
        ))}
      </g>
    ))}
    <g transform="translate(590 485) scale(.33333)">
      <path d={patches[0]} fill="none" stroke="#40351c" strokeWidth="12" strokeDasharray="14 3 8 4" />
      <path d={patches[0]} fill="none" stroke="#93602e" strokeWidth="3" strokeDasharray="4 14" />
      <path d={patches[1]} fill="none" stroke="#40351c" strokeWidth="6" />
      {specks.split(" ").map((q, i) => {
        const [x, y] = q.split(",").map(Number);
        return <rect key={i} x={x - 3} y={y - 2} width={i % 3 ? 5 : 8} height={i % 2 ? 4 : 6} fill="#40301b" />;
      })}
    </g>
  </svg>
);

const stats: [string, string][] = [["Licz", "6175"], ["Suma", "248181"], ["Średnia", "40.1913"], ["Mediana", "49"]];

export default function App() {
  return (
    <div className="flex h-[996px] w-[1570px] flex-col overflow-hidden bg-[#efefef] font-['Open_Sans',sans-serif] text-[12px] leading-[18px] tracking-[-0.3px] text-black">
      <div className="flex h-[21px] shrink-0 items-center border-b border-t border-b-[#d5d5d5] border-t-[#cb4f16] bg-[#f0f0f0] pl-[10px]">
        {menu.map(([a, u, b, w], i) => (
          <div key={i} className="shrink-0 whitespace-pre pt-px" style={{ width: w }}>
            {a}<span className="underline underline-offset-2">{u}</span>{b}
          </div>
        ))}
      </div>
      <ToolRow items={row1} h="h-[31px]" />
      <ToolRow items={row2} h="h-[31px]" />
      <ToolRow items={row3} h="h-[30px] pt-px" />

      <div className="flex min-h-0 flex-1">
        <div className="flex w-[328px] shrink-0 flex-col pt-px">
          <PanelTitle t="Przeglądarka" />
          <div className="mb-[2px] flex h-[28px] shrink-0 items-center gap-[9px] pl-2">
            {["addlayer", "refresh", "funnel", "collapse", "info"].map((n) => <Icon key={n} n={n} />)}
          </div>
          <div className="flex h-[136px] shrink-0 flex-col border border-[#b4b4b4] bg-white">
            <div className="flex h-[120px] shrink-0">
              <div className="min-w-0 flex-1 overflow-hidden">
                {files.map((f, i) => (
                  <div key={f} className={`flex h-[18px] items-start gap-[6px] pl-[143px] ${i === 6 ? "bg-[#efefef]" : ""}`}>
                    <Icon n={i === 6 ? "polysel" : "poly"} />
                    <span className="pt-px">{f}</span>
                  </div>
                ))}
              </div>
              <VScroll before="h-[16px] border-b border-[#b4b4b4]" thumb="h-[28px]" />
            </div>
            <div className="flex h-[14px] border-t border-[#b4b4b4] bg-[#e4e4e4]">
              <div className="flex w-[14px] items-center justify-center border-r border-[#b4b4b4] bg-[#f8f8f8]"><Arrow dir="left" /></div>
              <div className="w-[191px] border-r border-[#b4b4b4] bg-[#fafafa]" />
              <div className="flex-1" />
              <div className="flex w-[15px] items-center justify-center border-l border-[#b4b4b4] bg-[#f8f8f8]"><Arrow dir="right" /></div>
              <div className="w-[14px] border-l border-[#b4b4b4] bg-[#efefef]" />
            </div>
          </div>
          <Splitter />
          <PanelTitle t="Warstwy" />
          <div className="mb-[2px] flex h-[28px] shrink-0 items-center gap-[9px] pl-2">
            {["brush", "addgroup", "eye", "funnel", "eps"].map((n) => <Icon key={n} n={n} />)}
            <div className="-ml-[3px] -mr-[2px]"><Arrow /></div>
            {["expand", "collapse", "remove"].map((n) => <Icon key={n} n={n} />)}
          </div>
          <div className="flex h-[398px] shrink-0 border border-[#b4b4b4] bg-white">
            <div className="min-w-0 flex-1 overflow-hidden">
              {layers.map((l, i) => (
                <div key={i} className={`flex h-[18px] items-center pr-[5px] ${l.cur ? "bg-[#efefef]" : ""}`}>
                  <div className="flex w-[23px] shrink-0 pl-[6px]">{l.k === "pts" && <Arrow dir="right" />}</div>
                  <Check on={l.on} />
                  <div className="w-[6px] shrink-0" />
                  <Symbol l={l} />
                  <span className={`ml-[6px] flex-1 whitespace-nowrap pt-px font-bold ${l.on ? "tracking-[-0.36px] text-black" : "italic tracking-[0px] text-[#7d7d7d]"} ${l.cur ? "underline" : ""}`}>{l.n}</span>
                  {l.m && <div className="flex h-4 w-4 shrink-0 items-center justify-center bg-[#f3f3f3] outline outline-1 -outline-offset-0 outline-[#dedede]"><Icon n={l.cur ? "memsel" : "mem"} /></div>}
                </div>
              ))}
            </div>
            <VScroll before="h-0" thumb="h-[280px]" />
          </div>
          <Splitter />
          <PanelTitle t="Statystyki" />
          <div className="flex h-[23px] shrink-0 items-center rounded-[3px] border border-[#b0b0b0] bg-gradient-to-b from-white to-[#eeeeee] pl-[5px] pr-[7px]">
            <Icon n="points" />
            <span className="ml-[2px] flex-1 pt-px tracking-[-0.75px]">Wierzchołki</span>
            <Arrow />
          </div>
          <div className="mt-[4px] flex h-6 shrink-0 gap-[6px]">
            <div className="flex w-[298px] rounded-[2px] border border-[#3daee9] bg-white">
              <div className="flex flex-1 items-center pl-[3px]">
                <span className="w-[19px] font-['DejaVu_Sans',sans-serif] text-[9px] font-bold tracking-[-0.2px] text-[#555]">1.2</span>
                <span className="pt-px">cat</span>
                <div className="h-3 w-px bg-black" />
              </div>
              <div className="flex w-5 items-center justify-center border-l border-[#b4b4b4] pr-[2px]"><Arrow /></div>
            </div>
            <div className="flex w-6 items-center justify-center rounded-[3px] border border-[#b0b0b0] bg-[#f8f8f8] pb-1 font-['DejaVu_Serif',serif] text-[20px] text-[#6a3a6c]">ε</div>
          </div>
          <div className="mt-[3px] flex h-[130px] shrink-0 border border-[#b4b4b4] bg-white">
            <div className="flex min-w-0 flex-1 flex-col overflow-hidden">
              <div className="flex h-[19px] shrink-0 items-center bg-[#efefef]">
                <div className="h-[19px] w-[187px] border-b border-r border-[#c4c4c4] bg-gradient-to-b from-[#fafafa] to-[#eeeeee] text-center">Statystyka</div>
                <div className="h-[19px] w-[50px] whitespace-nowrap border-b border-[#c4c4c4] bg-gradient-to-b from-[#fafafa] to-[#eeeeee] pl-[3px]">Wartość</div>
              </div>
              {stats.map(([a, b], i) => (
                <div key={a} className={`flex h-[30px] w-[237px] shrink-0 ${i % 2 ? "bg-[#e8e7e3]" : "bg-white"}`}>
                  <div className="w-[187px] border-b border-r border-[#c4c4c4] pl-[3px] leading-[30px]">{a}</div>
                  <div className="w-[50px] border-b border-r border-[#c4c4c4] pl-[3px] leading-[30px]">{b}</div>
                </div>
              ))}
            </div>
            <VScroll before="h-0" thumb="h-[27px]" />
          </div>
          <div className="flex h-7 shrink-0 items-center">
            <Check />
            <span className="ml-[4px] flex-1 tracking-[-0.8px]">Tylko zaznaczone obiekty</span>
            <Icon n="copy2" />
            <div className="w-[11px]" />
            <Icon n="refresh" />
            <div className="ml-[7px] flex h-5 w-[23px] items-end justify-end rounded-[3px] border border-[#b0b0b0] bg-[#f8f8f8] pr-px leading-[14px]">…<span className="scale-75"><Arrow /></span></div>
          </div>
          <div className="ml-1 mt-px h-3 w-[200px] shrink-0 rounded-t-[3px] border border-[#b4b4b4] bg-white" />
        </div>
        <div className="flex w-[6px] shrink-0 items-center justify-end pb-[6px] pr-[2px]">
          <div className="h-[17px] w-px bg-[repeating-linear-gradient(180deg,#aaa_0_1px,transparent_1px_3px)]" />
        </div>
        <div className="flex min-w-0 flex-1 flex-col pt-px">
          <div className="h-[876px] shrink-0 border-b border-l border-t border-[#b0b0b0] bg-white"><MapCanvas /></div>
          <div className="flex shrink-0 pt-[3px]">
            <div className="ml-[800px] h-3 w-[103px] rounded-t-[3px] border border-[#b4b4b4] bg-white" />
            <div className="ml-[61px] flex h-3 w-[81px] rounded-t-[3px] border border-[#b4b4b4] bg-white"><div className="ml-[60px] w-px bg-[#b4b4b4]" /></div>
            <div className="ml-[99px] mt-px flex h-3 w-[88px] rounded-t-[3px] border border-[#b4b4b4] bg-white"><div className="ml-[72px] w-px bg-[#b4b4b4]" /></div>
          </div>
        </div>
      </div>
    </div>
  );
}
